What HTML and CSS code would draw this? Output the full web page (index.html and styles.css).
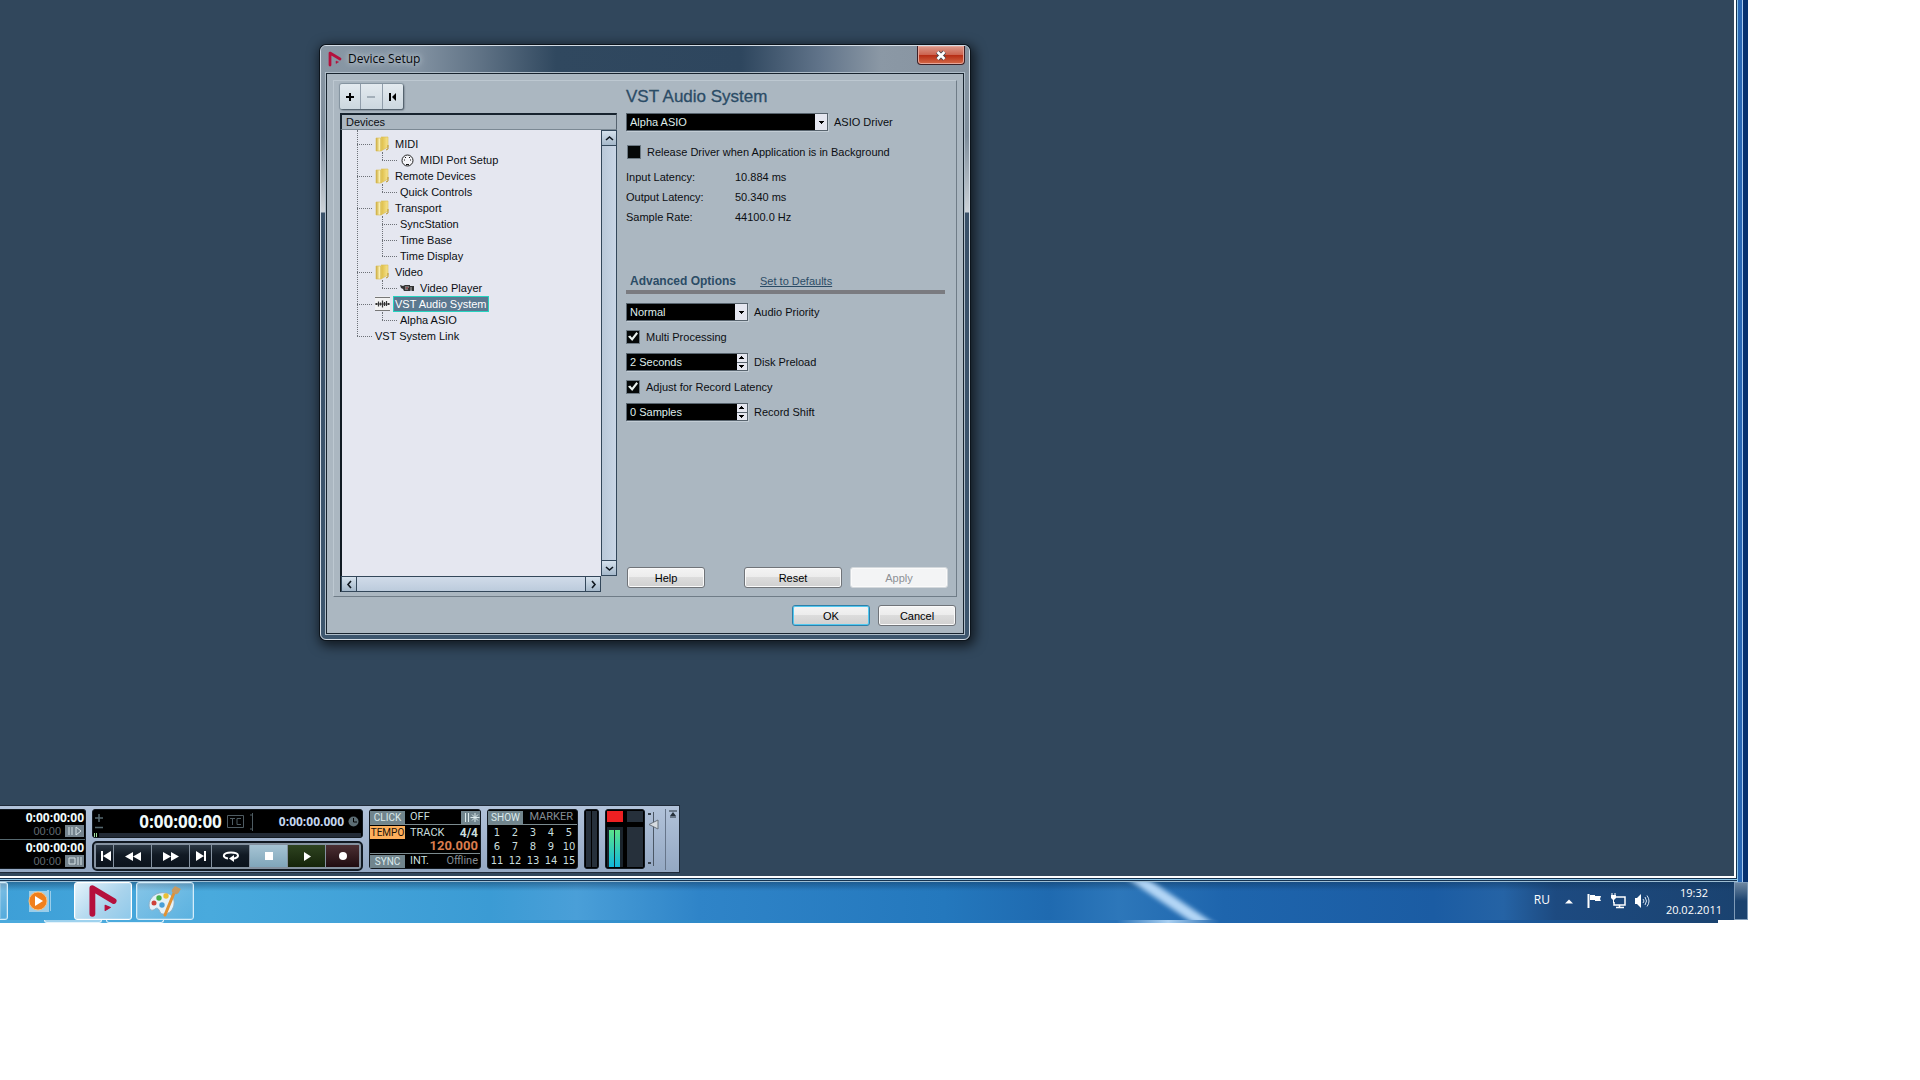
FILE: index.html
```html
<!DOCTYPE html>
<html lang="en">
<head>
<meta charset="utf-8">
<title>Device Setup</title>
<link rel="stylesheet" href="styles.css">
</head>
<body>
<svg class="defs" aria-hidden="true">
  <defs>
    <linearGradient id="gold" x1="0" x2="1"><stop offset="0" stop-color="#c9a93c"/><stop offset=".3" stop-color="#fbf0b0"/><stop offset=".5" stop-color="#e0c14e"/><stop offset="1" stop-color="#f7e48e"/></linearGradient>
  </defs>
  <symbol id="folder" viewBox="0 0 15 16"><path d="M1 2h4l1 1v12H1zM6 1h7v10l-7 4z" fill="url(#gold)" stroke="#d9bd55" stroke-width=".6"/><path d="M13 9v4l-2 1" stroke="#b9932a" fill="none"/></symbol>
  <symbol id="nuendo" viewBox="0 0 28 32"><path d="M4 28V4l20 12" fill="none" stroke="#b5103c" stroke-width="5.500" stroke-linecap="round" stroke-linejoin="round"/><path d="M16 20l5 2-5 3z" fill="#b5103c" stroke="#b5103c" stroke-linejoin="round"/></symbol>
</svg>
<div class="screen">
  <div class="frame">
  <main class="workspace">
    <section class="dialog" role="dialog" aria-labelledby="dlg-title">
      <header class="titlebar">
        <svg class="title-icon"><use href="#nuendo"/></svg>
        <h1 id="dlg-title">Device Setup</h1>
        <button class="close" aria-label="Close"><svg width="12" height="11" viewBox="0 0 12 11"><path d="M2.500 2l7 7M9.500 2l-7 7" stroke="#45474f" stroke-width="4.400"/><path d="M2.500 2l7 7M9.500 2l-7 7" stroke="#fff" stroke-width="2.600"/></svg></button>
      </header>
      <div class="client">
        <div class="group">
          <div class="devices">
            <div class="tools">
              <button aria-label="Add device"><svg width="10" height="10"><path d="M5 1v8M1 5h8" stroke="#000" stroke-width="2"/></svg></button>
              <button aria-label="Remove device"><svg width="10" height="10"><path d="M1 5h8" stroke="#a3afb9" stroke-width="2"/></svg></button>
              <button aria-label="Reset device"><svg width="10" height="10"><path d="M2 1v8" stroke="#000" stroke-width="2"/><path d="M8 1v8L4 5z"/></svg></button>
            </div>
            <div class="tree-box">
              <h2>Devices</h2>
              <div class="tree-view">
                <ul class="tree">
                  <li><div class="row"><svg class="icon"><use href="#folder"/></svg><span class="label">MIDI</span></div>
                    <ul><li><div class="row"><svg class="icon" viewBox="0 0 15 16"><circle cx="7.500" cy="8.500" r="5.500" fill="#f4f4f8" stroke="#222"/><path d="M4 8h1M5 5.500h1M9 5.500h1M10 8h1M6 12.500h3" stroke="#111"/></svg><span class="label">MIDI Port Setup</span></div></li></ul></li>
                  <li><div class="row"><svg class="icon"><use href="#folder"/></svg><span class="label">Remote Devices</span></div>
                    <ul><li><div class="row"><span class="label">Quick Controls</span></div></li></ul></li>
                  <li><div class="row"><svg class="icon"><use href="#folder"/></svg><span class="label">Transport</span></div>
                    <ul><li><div class="row"><span class="label">SyncStation</span></div></li><li><div class="row"><span class="label">Time Base</span></div></li><li><div class="row"><span class="label">Time Display</span></div></li></ul></li>
                  <li><div class="row"><svg class="icon"><use href="#folder"/></svg><span class="label">Video</span></div>
                    <ul><li><div class="row"><svg class="icon" viewBox="0 0 15 16"><path d="M0 5l3 1 2-1h5v1h4v5h-2l-1-1-1 1H4L3 9 1 8z" fill="#333"/><path d="M5 7h4M11 7v3M5 9h3" stroke="#bbb"/><path d="M6 8h2" stroke="#a33"/></svg><span class="label">Video Player</span></div></li></ul></li>
                  <li><div class="row"><svg class="icon" viewBox="0 0 15 16"><path d="M0 .5h15v14H0z" fill="#f2f2f2"/><path d="M0 1.500h15M0 14.500h15" stroke="#777"/><path d="M0 8h15M1.500 7v2M3.500 5.500v5M5.500 6.500v3M7.500 4.500v7M9.500 6v4M11.500 5v5M13.500 7v2" stroke="#333" stroke-width="1.200"/></svg><span class="label selected">VST Audio System</span></div>
                    <ul><li><div class="row"><span class="label">Alpha ASIO</span></div></li></ul></li>
                  <li><div class="row"><span class="label">VST System Link</span></div></li>
                </ul>
                <div class="scroll vertical"><button aria-label="Scroll up"><svg width="9" height="9"><path d="M1 6l3.500-3L8 6" /></svg></button><button aria-label="Scroll down"><svg width="9" height="9"><path d="M1 3l3.500 3L8 3"/></svg></button></div>
                <div class="scroll horizontal"><button aria-label="Scroll left"><svg width="9" height="9"><path d="M6 1L3 4.500 6 8"/></svg></button><button aria-label="Scroll right"><svg width="9" height="9"><path d="M3 1l3 3.500L3 8"/></svg></button></div>
              </div>
            </div>
          </div>
          <form class="settings" onsubmit="return false">
            <h2>VST Audio System</h2>
            <div class="field driver"><span class="combo wide"><select id="driver"><option>Alpha ASIO</option></select></span><label for="driver">ASIO Driver</label></div>
            <div class="field release"><input type="checkbox" id="release"><label for="release">Release Driver when Application is in Background</label></div>
            <dl class="stats">
              <dt>Input Latency:</dt><dd>10.884 ms</dd>
              <dt>Output Latency:</dt><dd>50.340 ms</dd>
              <dt>Sample Rate:</dt><dd>44100.0 Hz</dd>
            </dl>
            <div class="advanced"><h3>Advanced Options</h3><a href="#defaults">Set to Defaults</a></div>
            <div class="options">
              <div class="field"><span class="combo"><select id="priority"><option>Normal</option></select></span><label for="priority">Audio Priority</label></div>
              <div class="field"><input type="checkbox" id="multi" checked><label for="multi">Multi Processing</label></div>
              <div class="field"><span class="spin"><input type="text" id="preload" value="2 Seconds"><button aria-label="More preload"></button><button class="down" aria-label="Less preload"></button></span><label for="preload">Disk Preload</label></div>
              <div class="field"><input type="checkbox" id="adjust" checked><label for="adjust">Adjust for Record Latency</label></div>
              <div class="field"><span class="spin"><input type="text" id="shift" value="0 Samples"><button aria-label="More shift"></button><button class="down" aria-label="Less shift"></button></span><label for="shift">Record Shift</label></div>
            </div>
            <div class="actions"><button class="btn help">Help</button><button class="btn large">Reset</button><button class="btn large" disabled>Apply</button></div>
          </form>
        </div>
        <div class="actions confirm"><button class="btn primary">OK</button><button class="btn">Cancel</button></div>
      </div>
    </section>

    <section class="transport" aria-label="Transport">
      <div class="panel locators">
        <div class="locator"><strong>0:00:00:00</strong><div><span>00:00</span><button aria-label="Punch in"><svg width="16" height="10"><path d="M2 1v8M5 1v8M9 1l5 4-5 4z"/></svg></button></div></div>
        <div class="locator"><strong>0:00:00:00</strong><div><span>00:00</span><button aria-label="Punch out"><svg width="16" height="10"><path d="M2 2h6v6H2zM11 1v8M14 1v8"/></svg></button></div></div>
      </div>
      <div class="main-controls">
        <div class="panel clock">
          <div class="readout">
            <svg width="10" height="16"><path d="M5 0v8M1 4h8M1 13.500h8" stroke="#56686f" stroke-width="1.500"/></svg>
            <strong>0:00:00:00</strong>
            <svg class="tc" width="17" height="13"><path d="M.5.5h16v12H.5zM3 3.500h5M5.500 3.500V10M14 3.500h-4v6h4" fill="none" stroke="#4f5c63"/></svg>
            <svg width="5" height="20"><path d="M2.500 1v18M0 3h3M0 17h3" stroke="#4f5c63"/></svg>
            <b>0:00:00.000</b>
            <svg width="11" height="11"><circle cx="5.500" cy="5.500" r="5" fill="#5c6d74"/><path d="M5.500 2v4H9" fill="none" stroke="#000"/></svg>
          </div>
          <div class="position"></div>
        </div>
        <div class="keys">
          <button aria-label="Go to start"><svg viewBox="0 0 20 12"><path d="M5 1h2v10H5zM15 1v10L7 6z"/></svg></button>
          <button aria-label="Rewind"><svg viewBox="0 0 20 12"><path d="M10 2v9L2 6.500zM18 2v9l-8-4.500z"/></svg></button>
          <button aria-label="Forward"><svg viewBox="0 0 20 12"><path d="M2 2v9l8-4.500zM10 2v9l8-4.500z"/></svg></button>
          <button aria-label="Go to end"><svg viewBox="0 0 20 12"><path d="M13 1h2v10h-2zM5 1v10l8-5z"/></svg></button>
          <button aria-label="Cycle"><svg viewBox="0 0 20 12"><path d="M7 8.500C1 8 1 2.500 10 2.500s9 5.500 2 6" fill="none" stroke="#fff" stroke-width="2"/><path d="M13 5v7L8 8.500z"/></svg></button>
          <button class="stop" aria-label="Stop"><svg viewBox="0 0 20 12"><path d="M6 2h8v8H6z"/></svg></button>
          <button class="play" aria-label="Play"><svg viewBox="0 0 20 12"><path d="M7 2v9l7-4.500z"/></svg></button>
          <button class="record" aria-label="Record"><svg viewBox="0 0 20 12"><circle cx="10" cy="6" r="4"/></svg></button>
        </div>
      </div>
      <div class="panel tempo">
        <div class="line"><button>CLICK</button><span>OFF</span><button class="count" aria-label="Precount"><svg width="18" height="13"><path d="M3.500 2v9M6.500 2v9M13 2v9M8.500 6.500h9M10 3.500l6 6M16 3.500l-6 6"/></svg></button></div>
        <div class="line"><button class="on">TEMPO</button><span>TRACK</span><b>4/4</b></div>
        <strong>120.000</strong>
        <div class="line"><button>SYNC</button><span>INT.</span><i>Offline</i></div>
      </div>
      <div class="panel marker">
        <div class="line"><button>SHOW</button><i>MARKER</i></div>
        <div class="numbers"><button>1</button><button>2</button><button>3</button><button>4</button><button>5</button><button>6</button><button>7</button><button>8</button><button>9</button><button>10</button><button>11</button><button>12</button><button>13</button><button>14</button><button>15</button></div>
      </div>
      <div class="panel activity"><i></i><i></i></div>
      <div class="panel meters"><i class="clip"></i><i></i><span class="level"><i></i><i></i></span><i></i></div>
      <svg class="volume" width="14" height="60"><path d="M7.500 3v54" stroke="#4b5765"/><path d="M2 4h3v2H2zM2 53h3v2H2z" fill="#38424d"/><path d="M12 11v9l-9-4.500z" fill="#d6dbe0" stroke="#69727c"/></svg>
      <div class="edge"><svg width="8" height="8"><path d="M0 1h8M1 7h6" stroke="#26303b"/><path d="M4 2l3 4H1z" fill="#26303b"/></svg></div>
    </section>
  </main>
  </div>

  <footer class="taskbar">
    <nav class="apps">
      <button class="app cut" aria-label="Previous window"></button>
      <button class="app plain" aria-label="Media Player"><svg width="28" height="26"><path d="M2 3h18v21H2zM20 2h2v22h-2zM23 3h1v20h-1z" fill="#b8dcf0" opacity=".75"/><circle cx="11" cy="13" r="9" fill="#f07f1c" stroke="#fbc07c"/><path d="M8 8v10l8-5z" fill="#fff"/></svg></button>
      <button class="app active" aria-label="Nuendo"><svg width="30" height="34"><use href="#nuendo"/></svg></button>
      <button class="app" aria-label="Paint"><svg width="34" height="32"><path d="M18 8C8 6 1 13 1 20c0 6 4 6 6 4s4 0 5 3 7 3 11-1 6-16-5-18z" fill="#e4f1f8" stroke="#8ab0c8"/><circle cx="6" cy="18" r="2.500" fill="#cf4038"/><circle cx="11" cy="13" r="2.700" fill="#46b048"/><circle cx="18" cy="11" r="2.700" fill="#eabf36"/><circle cx="14" cy="20" r="2.700" fill="#4a9fd8"/><path d="M17 30L26 8" stroke="#e09235" stroke-width="3" stroke-linecap="round"/><path d="M24 7c-1-3 2-4 3-6l6 3c-2 2-2 6-6 5z" fill="#c79a62"/></svg></button>
    </nav>
    <div class="tray">
      <button class="lang">RU</button>
      <button class="more" aria-label="Show hidden icons"><svg width="8" height="5"><path d="M0 4.500L4 .5l4 4z" fill="#fff"/></svg></button>
      <button aria-label="Action center"><svg width="16" height="16"><path d="M2.500 1v14" stroke="#fff" stroke-width="2"/><path d="M4 2h5v1h6l-1 3 1 2H9V7H4z" fill="#fff"/></svg></button>
      <button aria-label="Network"><svg width="16" height="16"><path d="M6 4h9v8H4V9M9.500 12v3M6 14.500h8" fill="none" stroke="#fff" stroke-width="1.500"/><path d="M1 2h5v3L4 7H3L1 5z" fill="#fff"/><path d="M2 0v3M5 0v3M3.500 6v4" stroke="#fff"/></svg></button>
      <button aria-label="Volume"><svg width="16" height="16"><path d="M1 5h2l4-4v14l-4-4H1z" fill="#fff"/><path d="M9 6q2 2 0 4M11 4q3 4 0 8M13 2.500q4 5.500 0 11" fill="none" stroke="#d5e3f2"/></svg></button>
      <time>19:32<br>20.02.2011</time>
      <button class="show-desktop" aria-label="Show desktop"></button>
    </div>
  </footer>
  <div class="underlap"><i></i><i></i></div>
</div>
</body>
</html>
```
FILE: styles.css
```css
* { box-sizing: border-box; }
body {
  margin: 0;
  min-height: 100vh;
  padding: 0 172px 157px 0;
  display: flex;
  background: #fff;
  font: 11px/16px "Liberation Sans", Arial, sans-serif;
  color: #0b0e12;
}
button, input, select { font: inherit; color: inherit; margin: 0; padding: 0; border: 0; background: none; border-radius: 0; }
h1, h2, h3, ul, dl, dd { margin: 0; padding: 0; font: inherit; list-style: none; }
svg { display: block; flex: none; }
i { font-style: normal; }
.defs { position: absolute; width: 0; height: 0; }

.screen { flex: 1; min-width: 0; display: flex; flex-direction: column; }
/* Layered window borders to the right of and below the workspace */
.frame {
  flex: 1;
  display: flex;
  padding: 0 12px 4px 0;
  background:
    linear-gradient(#16324f 1px, #8ec8ec 1px, #8ec8ec 2px, #16324f 2px, #16324f 3px, #9dbdd2 3px) left bottom / calc(100% - 11px) 4px no-repeat,
    linear-gradient(to left, #07316f 5px, #a9c9ee 5px, #a9c9ee 6px, #2a68b4 6px, #2a68b4 10px, #8ec8ec 10px, #8ec8ec 11px, #16324f 11px);
}
.workspace {
  position: relative;
  flex: 1;
  display: flex;
  flex-direction: column;
  justify-content: flex-end;
  align-items: flex-start;
  padding-bottom: 3px;
  background: #31475c;
  border-right: 2px solid #fff;
  border-bottom: 2px solid #fff;
}

/* Device Setup window */
.dialog {
  position: absolute;
  left: 320px;
  top: 45px;
  width: 650px;
  border: 1px solid #d3dce5;
  border-radius: 6px;
  padding: 0 5px 5px;
  background: linear-gradient(#8a98a5, #7f8e9c 90px, #ccd2d8 166px, #3a5169 167px, #3d566e);
  box-shadow: 0 0 0 1px #0c141c, 2px 3px 12px 3px rgba(0, 0, 0, .65);
}
.titlebar {
  display: flex;
  align-items: flex-start;
  margin: 0 -5px;
  height: 27px;
  padding: 0 4px 0 6px;
  border-radius: 5px 5px 0 0;
  background: linear-gradient(90deg, #8997a4, #8090a0 100px, #5f7285 160px, #30485f 235px, #2e465e 420px, #61748a 500px, #8b98a5 560px, #8693a0);
}
.title-icon { width: 16px; height: 16px; margin-top: 5px; }
.titlebar h1 { margin: 4px 0 0 5px; font: 12px/18px "Open Sans", "Noto Sans", sans-serif; color: #05080b; text-shadow: 0 0 8px #c9d2da, 0 0 5px #c9d2da; }
.close {
  margin-left: auto;
  width: 48px;
  height: 19px;
  display: flex;
  justify-content: center;
  align-items: center;
  border: 1px solid #3c2026;
  border-top: 0;
  border-radius: 0 0 4px 4px;
  box-shadow: inset 0 0 0 1px #e7a598;
  background: linear-gradient(#dc9a8c, #cc6450 48%, #b52b13 50%, #d46a48);
}
.client { border: 1px solid #17232e; box-shadow: 0 0 0 1px #aebcc8; background: #abb7c1; padding: 6px 6px 7px; }
.group {
  display: grid;
  grid-template-columns: 277px 1fr;
  column-gap: 9px;
  padding: 3px 1px 4px 6px;
  border: 1px solid #6f7c87;
  border-top-color: #bdc8d1;
  border-left-color: #bdc8d1;
}
.tools { display: flex; width: 63px; height: 25px; margin-bottom: 4px; background: linear-gradient(#e3eaef, #ccd7df); border-radius: 2px; box-shadow: 1px 1px 2px #45525e, 0 0 1px 1px #8795a1; }
.tools button { flex: 1; display: grid; place-items: center; }
.tools button + button { border-left: 1px solid #909daa; }
.tree-box h2 { height: 17px; padding: 0 0 0 4px; border: 1px solid #17232e; border-width: 2px 1px 1px 2px; line-height: 14px; border-bottom-color: #7b8994; border-right-color: #56636f; }
.tree-view { display: grid; grid-template-columns: 1fr 16px; grid-template-rows: 446px 16px; }
.tree { position: relative; padding: 6px 0 0 15px; background: #e5e7f0; border-left: 2px solid #101a22; }
.tree::before, .tree ul::before { content: ""; position: absolute; border-left: 1px dotted #6d7178; }
.tree::before { left: 15px; top: 0; height: 206px; }
.tree ul { position: relative; margin-left: 25px; }
.tree ul::before { left: 0; top: 0; bottom: 8px; }
.row { display: flex; align-items: center; gap: 3px; height: 16px; }
.row::before { content: ""; width: 15px; border-top: 1px dotted #6d7178; }
.icon { width: 15px; height: 16px; }
.label { line-height: 14px; }
.icon + .label { padding: 0 1px; border: 1px solid transparent; }
.icon + .selected { background: #5b7890; color: #fff; border-color: #26d3c0; }
.scroll { display: flex; justify-content: space-between; border: 1px solid #33475a; }
.vertical { flex-direction: column; background: linear-gradient(90deg, #b9c8d8, #c9d6e6); }
.horizontal { background: linear-gradient(#d0dbe9, #bccbdc); border-left: 2px solid #101a22; }
.scroll button { width: 14px; height: 14px; display: grid; place-items: center; background: linear-gradient(#d6e2ed, #a5b8ca); box-shadow: 0 0 0 1px #33475a; }
.scroll path { fill: none; stroke: #101820; stroke-width: 1.6; }

.settings { display: flex; flex-direction: column; }
.settings h2 { height: 29px; font-size: 17px; line-height: 26px; color: #2b4c66; -webkit-text-stroke: 0.3px #2b4c66; }
.field { display: flex; align-items: center; }
.combo { position: relative; display: flex; width: 122px; margin-right: 6px; }
.combo.wide { width: 202px; }
.combo select, .spin { width: 100%; height: 18px; background: #000; color: #dfeceb; border: 1px solid #57636d; box-shadow: 1px 1px #c3cdd5; }
.combo select { appearance: none; padding: 0 18px 0 3px; }
.combo::after { content: ""; position: absolute; right: 1px; top: 1px; width: 12px; height: 16px; background: linear-gradient(#000, #000) 4px 7px / 5px 1px no-repeat, linear-gradient(#000, #000) 5px 8px / 3px 1px no-repeat, linear-gradient(#000, #000) 6px 9px / 1px 1px no-repeat, #e5e7f0; pointer-events: none; }
.spin { display: grid; grid-template-columns: 1fr 10px; grid-template-rows: 8px 8px; width: 122px; margin-right: 6px; }
.spin input { grid-row: 1 / 3; width: 100%; min-width: 0; padding-left: 3px; }
.spin button { background: linear-gradient(#000, #000) 4px 2px / 1px 1px no-repeat, linear-gradient(#000, #000) 3px 3px / 3px 1px no-repeat, linear-gradient(#000, #000) 2px 4px / 5px 1px no-repeat, #e5e7f0; }
.spin .down { border-top: 1px solid #57636d; background: linear-gradient(#000, #000) 2px 2px / 5px 1px no-repeat, linear-gradient(#000, #000) 3px 3px / 3px 1px no-repeat, linear-gradient(#000, #000) 4px 4px / 1px 1px no-repeat, #e5e7f0; }
input[type="checkbox"] { appearance: none; width: 14px; height: 14px; margin-right: 6px; background: #050808; border: 1px solid #6c7983; display: grid; place-items: center; }
input[type="checkbox"]:checked::before { content: ""; width: 10px; height: 9px; background: #e8f0ee; clip-path: polygon(0 50%, 22% 38%, 40% 65%, 84% 0, 100% 16%, 42% 100%); }
.release { height: 20px; margin-top: 11px; padding-left: 1px; }
.stats { display: grid; grid-template-columns: 109px 1fr; line-height: 20px; margin-top: 5px; }
.advanced { display: flex; gap: 24px; align-items: center; height: 23px; margin: 44px 10px 5px 0; padding-left: 4px; border-bottom: 4px solid #7a7b80; color: #2b4c66; }
.advanced h3 { font-weight: bold; font-size: 12px; }
.advanced a { color: inherit; }
.options { display: grid; grid-auto-rows: 25px; }
.actions { display: flex; gap: 8px; margin: auto 7px 4px 1px; }
.btn { width: 78px; height: 21px; border: 1px solid #707479; border-radius: 3px; background: linear-gradient(#f4f4f4, #ececec 48%, #dcdcdc 50%, #d0d0d0); box-shadow: inset 0 0 0 1px #fafafa; color: #000; }
.btn.large { width: 98px; }
.btn.help { margin-right: auto; }
.btn:disabled { background: #f3f4f5; border-color: #d3d8dc; color: #8d9196; }
.btn.primary { border-color: #2f7fa8; box-shadow: inset 0 0 0 1px #52c8f0; }
.confirm { justify-content: flex-end; margin: 8px 1px 0; }

/* Transport bar */
.transport {
  display: flex;
  gap: 6px;
  height: 68px;
  padding: 3px 3px 2px 0;
  border: 1px solid #1f2b3a;
  border-left: 0;
  background: linear-gradient(#b2c3da, #94a8c3);
  color: #c9dedd;
  line-height: 14px;
}
.panel { background: #000; border-radius: 3px; height: 60px; border: 1px solid #11181f; }
.transport button { display: grid; place-items: center; }
.locators { width: 86px; border-left: 0; border-radius: 0 3px 3px 0; }
.locator { height: 29px; text-align: right; padding-right: 1px; }
.locator + .locator { border-top: 1px solid #56686f; }
.locator strong { display: block; font: bold 12px/15px "Open Sans", sans-serif; color: #f0fafa; }
.locator > div { display: flex; justify-content: flex-end; gap: 4px; line-height: 13px; color: #626b72; }
.locator button { width: 19px; height: 12px; background: #74838d; }
.locator path { fill: none; stroke: #d5e2e6; }
.main-controls { width: 271px; }
.clock { height: 29px; padding: 1px; }
.readout { display: flex; align-items: center; height: 21px; padding-right: 2px; }
.readout strong { margin: 0 5px 0 auto; font: bold 17px/20px "Open Sans", sans-serif; color: #f0fafa; }
.tc { margin-right: 6px; }
.readout b { margin: 0 4px 0 24px; font: bold 12px/20px "Open Sans", sans-serif; color: #c4d6ee; }
.position { height: 4px; margin-top: 1px; background: linear-gradient(90deg, #9fe09f 1px, #000 1px, #000 2px, #9fe09f 2px, #9fe09f 3px, #000 3px, #000 5px, #222a35 5px); }
.keys { display: grid; grid-template-columns: 18fr 38fr 38fr 22fr 38fr 38fr 38fr 34fr; gap: 1px; height: 30px; margin-top: 3px; padding: 2px; border-radius: 5px; background: #8592a0; border: 2px solid #111922; }
.keys button { min-width: 0; background: linear-gradient(#2c3844, #111a24 45%, #0b131c); }
.keys svg { width: 20px; height: 12px; fill: #fff; }
.keys .stop { background: linear-gradient(#a6c4d4, #80a6ba); }
.keys .play { background: linear-gradient(#2e4320, #15240a); }
.keys .record { background: linear-gradient(#4b2f33, #200c10); }
.line { display: flex; align-items: center; height: 15px; font-family: Roboto, sans-serif; }
.line button { width: 35px; height: 13px; margin-right: 5px; background: #71858d; color: #dceaec; font-size: 10px; line-height: 13px; }
.line > :last-child { margin-left: auto; margin-right: 2px; }
.line .on { background: #fdaf5c; color: #1b1208; }
.line i { color: #858d94; }
.line b { font-size: 12px; }
.tempo { width: 112px; display: flex; flex-direction: column; }
.tempo .line:first-child, .marker .line { border-bottom: 1px solid #7c8b8f; }
.tempo .line:last-child { border-top: 1px solid #7c8b8f; margin-top: auto; }
.tempo .line .count { width: 19px; margin-right: 0; }
.count path { stroke: #dceaec; }
.tempo strong { display: block; height: 12px; padding-right: 2px; text-align: right; font: bold 13px/12px Roboto, sans-serif; color: #d97d4e; }
.marker { width: 91px; }
.marker .line > :last-child { margin-right: 4px; }
.numbers { display: grid; grid-template-columns: repeat(5, 18px); grid-auto-rows: 14px; font-family: "DejaVu Sans", sans-serif; font-size: 10px; padding-top: 1px; }
.activity { width: 15px; display: grid; grid-template-columns: 5px 5px; gap: 1px; padding: 1px; }
.activity i, .meters > i { background: #26303b; }
.meters { width: 40px; display: grid; grid-template: 11px 1fr / 16px 16px; gap: 5px 4px; padding: 1px; }
.meters .clip { background: #ee2022; }
.level { display: grid; grid-template-columns: 5px 5px; gap: 1px; padding: 3px 0 0 2px; background: #1a232c; }
.level i { background: linear-gradient(#5ae48a, #10b8dc); }
.volume { margin: 0 -1px 0 -5px; }
.edge { border-left: 1px solid #66758a; padding: 1px 0 0 3px; width: 11px; }

/* Taskbar */
.taskbar {
  position: relative;
  display: flex;
  overflow: hidden;
  height: 38px;
  background: linear-gradient(rgba(15, 50, 85, .45), transparent 9px), linear-gradient(90deg, #3d9fd7, #49aadd 12%, #3b9bd4 28%, #4a9fd8 33%, #2f84c8 40%, #2478bd 54%, #1f6ab0 60%, #2d77ba 64%, #1e65ad 70%, #1b5ca3 82%, #2563a5 86%, #1d4a80 89%, #1a426f);
}
.taskbar::before { content: ""; position: absolute; left: 66.500%; top: -4px; width: 20px; height: 48px; background: #b3d6f6; transform: skewX(56deg); filter: blur(4px); }
.apps { display: flex; align-items: stretch; gap: 4px; position: relative; }
.app { width: 58px; display: grid; place-items: center; border: 1px solid #d4edfa; border-radius: 3px; box-shadow: inset 0 0 0 1px rgba(255,255,255,.2); background: linear-gradient(135deg, rgba(255,255,255,.35), rgba(255,255,255,.1)); }
.app.cut { width: 8px; border-left: 0; border-radius: 0 3px 3px 0; }
.app.plain { border: 0; background: none; box-shadow: none; }
.app.active { background: linear-gradient(135deg, #e4f3fb, #a9d3ec 60%, #8fc9ea); border-color: #fff; }
.tray { position: relative; margin-left: auto; display: flex; align-items: center; gap: 8px; color: #fff; font: 11px/17px "Open Sans", "Noto Sans", sans-serif; }
.lang { margin: 0 7px 4px 0; font-size: 12px; }
.more { margin-right: 5px; }
.tray time { margin: 0 4px 0 8px; text-align: center; }
.show-desktop { align-self: stretch; width: 14px; border: 1px solid #7f9bb8; background: linear-gradient(#6c86a0, #1b426e 50%); }
.underlap { display: flex; gap: 4px; height: 3px; margin-right: 30px; padding-left: 44px; background: linear-gradient(90deg, #4baadd 12%, #3b9bd4 28%, #2478bd 54%, #2872b8 65%, #a9d0f2 68%, #1f66ae 71%, #1b5ca3 86%, #1a426f); }
.underlap i { width: 58px; border: 1px solid #e4f3fb; border-top: 0; border-radius: 0 0 3px 3px; }
.underlap i:first-child { background: #9fd2ee; }
```
